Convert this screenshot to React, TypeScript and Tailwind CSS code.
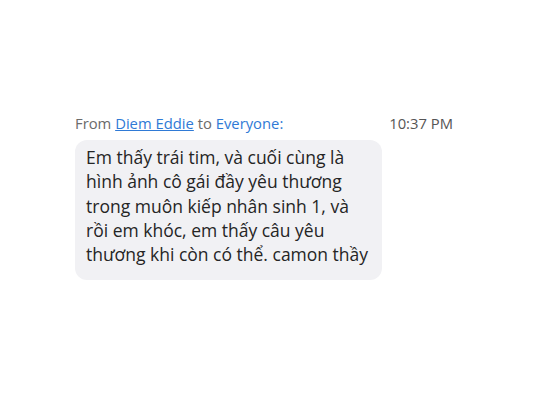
export default function App() {
  return (
    <div
      className="w-[533px] h-[400px] bg-white"
      style={{ fontFamily: '"Open Sans", "Noto Sans", sans-serif' }}
    >
      <div className="pl-[75px] pt-[113px] w-[453px]">
        {/* header */}
        <div className="flex items-center justify-between text-[14.8px] leading-[21px]">
          <div className="text-[#6b6b6b]">
            From{" "}
            <span className="text-[#2f7ad6] underline">Diem Eddie</span>{" "}
            to <span className="text-[#2f7ad6]">Everyone:</span>
          </div>
          <div className="text-[#555]">10:37 PM</div>
        </div>

        {/* message */}
        <div className="mt-[6px] w-[307px] rounded-[12px] bg-[#f1f1f4] pl-[11px] pr-2 pt-[5px] pb-[14px] text-[17.5px] leading-[24.3px] text-[#252525]">
          Em thấy trái tim, và cuối cùng là hình ảnh cô gái đầy yêu thương
          trong muôn kiếp nhân sinh 1, và rồi em khóc, em thấy câu yêu thương
          khi còn có thể. camon thầy
        </div>
      </div>
    </div>
  );
}
